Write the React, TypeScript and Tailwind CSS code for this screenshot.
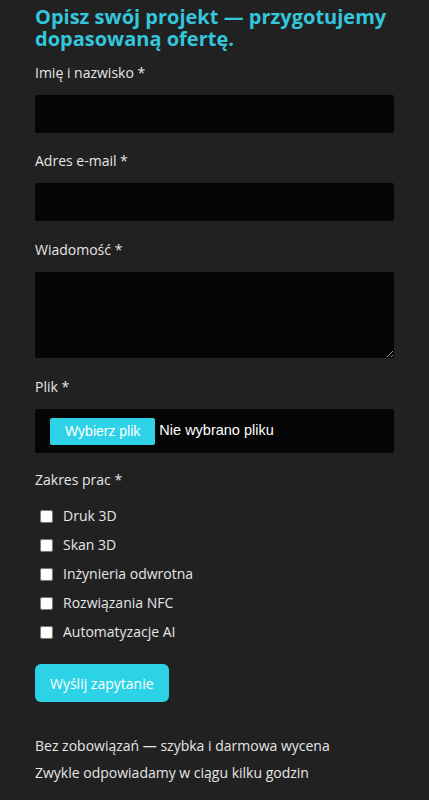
import React from 'react';

const scopes = ['Druk 3D', 'Skan 3D', 'Inżynieria odwrotna', 'Rozwiązania NFC', 'Automatyzacje AI'];

const Label = ({ children }: { children: React.ReactNode }) => (
  <label className="block text-[14px] leading-5 text-[#e6e6e6] mb-3">{children}</label>
);

export default function App() {
  return (
    <div
      className="min-h-[800px] w-full bg-[#212121] px-[35px] pt-[6px] pb-8"
      style={{ fontFamily: '"Open Sans", "Noto Sans", sans-serif' }}
    >
      {/* naglowek */}
      <h1 className="text-[20px] leading-[22px] font-bold text-[#33c6dc] mb-[13px]">
        Opisz swój projekt — przygotujemy dopasowaną ofertę.
      </h1>

      <form className="flex flex-col" onSubmit={(e) => e.preventDefault()}>
        <div className="mb-[18px]">
          <Label>Imię i nazwisko *</Label>
          <input type="text" className="block w-full h-[38px] bg-[#050505] rounded-[2px] outline-none text-white px-3" />
        </div>

        <div className="mb-[19px]">
          <Label>Adres e-mail *</Label>
          <input type="email" className="block w-full h-[38px] bg-[#050505] rounded-[2px] outline-none text-white px-3" />
        </div>

        <div className="mb-[19px]">
          <Label>Wiadomość *</Label>
          <textarea className="block w-full h-[86px] bg-[#050505] rounded-[2px] outline-none text-white px-3 py-2" />
        </div>

        <div className="mb-[17px]">
          <Label>Plik *</Label>
          <div className="flex items-center h-[44px] bg-[#050505] rounded-[2px] pl-[15px]">
            <span
              className="inline-flex items-center h-[27px] px-[15px] bg-[#2fd2e6] rounded-[2px] text-white text-[14px]"
              style={{ fontFamily: '"Liberation Sans", Arial, sans-serif' }}
            >
              Wybierz plik
            </span>
            <span
              className="ml-[4px] text-white text-[14.5px]"
              style={{ fontFamily: '"Liberation Sans", Arial, sans-serif' }}
            >
              Nie wybrano pliku
            </span>
          </div>
        </div>

        <div className="mb-[23px]">
          <Label>Zakres prac *</Label>
          <div className="flex flex-col gap-[9px] pt-[3px]">
            {scopes.map((s) => (
              <label key={s} className="flex items-center h-5 text-[14px] text-[#e6e6e6]">
                <input type="checkbox" className="w-[13px] h-[13px] ml-[5px] mr-[10px] mt-[3px] accent-white" />
                <span>{s}</span>
              </label>
            ))}
          </div>
        </div>

        <button
          type="submit"
          className="self-start h-[38px] px-[15px] bg-[#2cd3e6] rounded-[6px] text-white text-[14px]"
        >
          Wyślij zapytanie
        </button>
      </form>

      <div className="mt-[30px] text-[14px] text-[#e6e6e6] leading-[27px]">
        <p>Bez zobowiązań — szybka i darmowa wycena</p>
        <p>Zwykle odpowiadamy w ciągu kilku godzin</p>
      </div>
    </div>
  );
}
